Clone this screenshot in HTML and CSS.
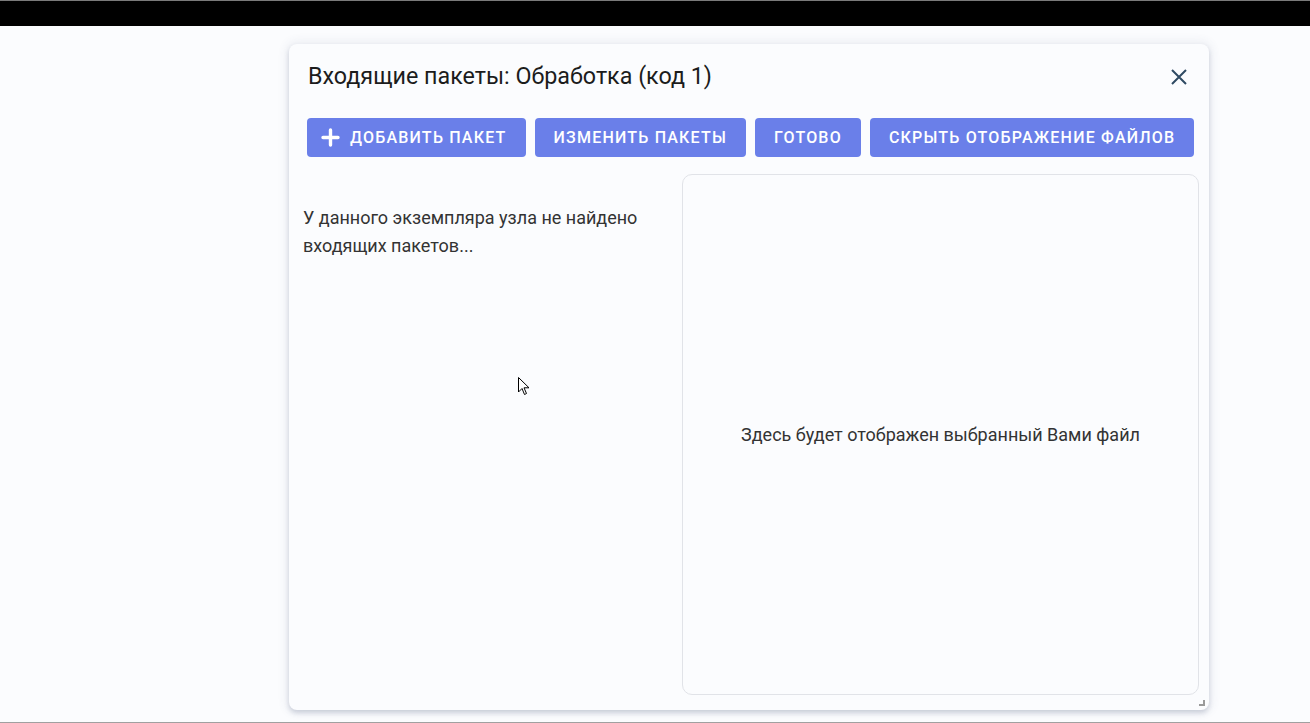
FILE: index.html
```html
<!DOCTYPE html>
<html lang="ru">
<head>
<meta charset="utf-8">
<title>Входящие пакеты</title>
<link rel="stylesheet" href="styles.css">
</head>
<body>
<div class="topbar"></div>
<main class="stage">
  <section class="dialog">
    <header class="dialog-head">
      <h1 class="dialog-title">Входящие пакеты: Обработка (код 1)</h1>
      <button class="close" aria-label="Закрыть">
        <svg width="18" height="18" viewBox="0 0 18 18"><path d="M2 2 L16 16 M16 2 L2 16" stroke="#2f4a63" stroke-width="2" fill="none"/></svg>
      </button>
    </header>
    <div class="actions">
      <button class="btn"><svg class="plus" width="19" height="19" viewBox="0 0 19 19"><path d="M9.5 2 V17 M2 9.5 H17" stroke="#fff" stroke-width="3.4" stroke-linecap="round"/></svg>Добавить пакет</button>
      <button class="btn">Изменить пакеты</button>
      <button class="btn">Готово</button>
      <button class="btn">Скрыть отображение файлов</button>
    </div>
    <div class="content">
      <div class="list">
        <p class="empty">У данного экземпляра узла не найдено входящих пакетов...</p>
      </div>
      <div class="viewer">
        <p class="viewer-text">Здесь будет отображен выбранный Вами файл</p>
      </div>
    </div>
    <span class="resize"></span>
  </section>
  <svg class="cursor" width="12" height="19" viewBox="0 0 12 19"><path d="M0.5 0.5 L0.5 15 L4 11.5 L6.5 17.5 L8.5 16.5 L6 10.8 L11 10.8 Z" fill="#fff" stroke="#000" stroke-width="1"/></svg>
</main>
<div class="bottomline"></div>
</body>
</html>
```

FILE: styles.css
```css
* { box-sizing: border-box; }
html, body { margin: 0; padding: 0; }
body {
  background: #fbfcfe;
  font-family: Roboto, "Noto Sans", sans-serif;
  color: #333;
  height: 723px;
  overflow: hidden;
  display: flex;
  flex-direction: column;
}
.topbar {
  height: 26px;
  background: #000;
  border-top: 1px solid #7a7a7a;
  flex: none;
}
.stage {
  flex: 1;
  position: relative;
  padding: 18px 0 0 289px;
}
.bottomline {
  height: 1px;
  background: #a0a0a0;
  flex: none;
}
.dialog {
  position: relative;
  width: 920px;
  height: 666px;
  background: #fbfcfe;
  border-radius: 8px;
  box-shadow: 0 3px 5px rgba(70, 80, 120, 0.22), 0 0 10px 3px rgba(70, 80, 120, 0.08);
  display: flex;
  flex-direction: column;
  padding: 17px 10px 15px 14px;
}
.dialog-head {
  display: flex;
  align-items: center;
  justify-content: space-between;
  height: 31px;
  padding: 0 11px 0 5px;
}
.dialog-title {
  margin: 0;
  font-size: 23.3px;
  font-weight: 400;
  color: #1c1c1c;
  line-height: 31px;
}
.close {
  border: 0;
  background: none;
  padding: 0;
  width: 18px;
  height: 18px;
  display: flex;
  margin-top: 1px;
}
.actions {
  display: flex;
  gap: 9px;
  margin-top: 26px;
  padding-left: 4px;
}
.btn {
  height: 39px;
  border: 0;
  border-radius: 4px;
  background: #6a7fe9;
  color: #fff;
  font-family: Roboto, "Noto Sans", sans-serif;
  font-size: 16px;
  font-weight: 500;
  letter-spacing: 1.2px;
  text-transform: uppercase;
  padding: 0 19px;
  display: flex;
  align-items: center;
}
.plus { margin: 0 10px 0 -5px; }
.content {
  flex: 1;
  display: flex;
  margin-top: 17px;
}
.list {
  width: 379px;
  padding-top: 30px;
  padding-right: 20px;
}
.empty {
  margin: 0;
  font-size: 18px;
  line-height: 28px;
  color: #333;
}
.viewer {
  flex: 1;
  border: 1px solid #e1e3e8;
  border-radius: 10px;
  display: flex;
  align-items: center;
  justify-content: center;
}
.viewer-text {
  margin: 0;
  font-size: 18px;
  color: #333;
}
.resize {
  position: absolute;
  right: 4px;
  bottom: 4px;
  width: 6px;
  height: 6px;
  border-right: 2px solid #9a9a9a;
  border-bottom: 2px solid #9a9a9a;
}
.cursor {
  position: absolute;
  left: 518px;
  top: 351px;
}
```
